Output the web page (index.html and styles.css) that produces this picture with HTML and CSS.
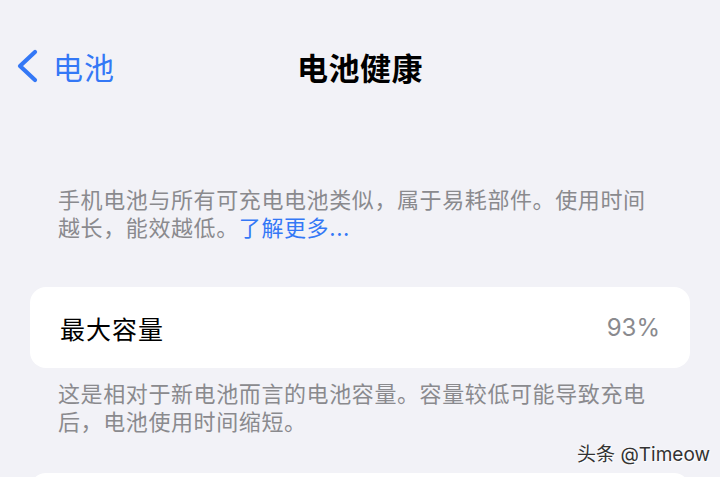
FILE: index.html
```html
<!DOCTYPE html>
<html lang="zh-CN">
<head>
    <meta charset="UTF-8">
    <meta name="viewport" content="width=device-width, initial-scale=1.0">
    <title>电池健康</title>
    <link rel="stylesheet" href="styles.css">
</head>
<body>
    <div class="screen">
        <div class="nav-bar">
            <a class="back" href="#">
                <svg class="chevron" width="24" height="36" viewBox="0 0 24 36">
                    <path d="M19 4 L4 18 L19 32" fill="none" stroke="#3478f6" stroke-width="4.2" stroke-linecap="round" stroke-linejoin="round"/>
                </svg>
                <span>电池</span>
            </a>
            <h1 class="title">电池健康</h1>
        </div>

        <div class="note intro">
            <div class="line">手机电池与所有可充电电池类似，属于易耗部件。使用时间</div>
            <div class="line"><span>越长，能效越低。</span><a href="#">了解更多...</a></div>
        </div>

        <div class="card">
            <div class="row">
                <span class="label">最大容量</span>
                <span class="value">93%</span>
            </div>
        </div>

        <p class="note">这是相对于新电池而言的电池容量。容量较低可能导致充电后，电池使用时间缩短。</p>

        <div class="card next"></div>

        <div class="watermark">头条 @Timeow</div>
    </div>
</body>
</html>
```

FILE: styles.css
```css
body {
    margin: 0;
    padding: 0;
    background-color: #f2f2f7;
    font-family: Inter, "Noto Sans CJK SC", sans-serif;
    color: #000;
    overflow: hidden;
}

.screen {
    position: relative;
    width: 720px;
    height: 477px;
    overflow: hidden;
}

.nav-bar {
    position: relative;
    display: flex;
    align-items: center;
    justify-content: center;
    height: 52px;
    margin-top: 40px;
}

.back {
    position: absolute;
    left: 16px;
    top: 0;
    height: 52px;
    display: flex;
    align-items: center;
    gap: 13px;
    color: #3478f6;
    text-decoration: none;
    font-size: 30px;
    letter-spacing: 1px;
}

.chevron {
    display: block;
}

.title {
    margin: 0;
    font-size: 31px;
    font-weight: 700;
    letter-spacing: 0.5px;
}

.note {
    margin: 0;
    padding: 0 60px 0 58px;
    font-size: 22px;
    line-height: 28px;
    letter-spacing: 0.6px;
    color: #8a8a8e;
}

.intro {
    margin-top: 94px;
    padding-right: 0;
}

.line {
    white-space: nowrap;
}

.intro a {
    color: #3478f6;
    text-decoration: none;
}

.card {
    margin: 45px 30px 12px;
    background: #fff;
    border-radius: 16px;
}

.row {
    display: flex;
    align-items: center;
    justify-content: space-between;
    height: 81px;
    padding: 0 30px;
}

.label {
    font-size: 25px;
    letter-spacing: 1px;
}

.value {
    font-size: 24px;
    color: #8a8a8e;
}

.card.next {
    margin-top: 37px;
    height: 40px;
}

.watermark {
    position: absolute;
    right: 10px;
    top: 439px;
    font-size: 19px;
    color: #333;
    text-shadow: 0 0 2px #fff, 1px 1px 1px #fff;
}
```
